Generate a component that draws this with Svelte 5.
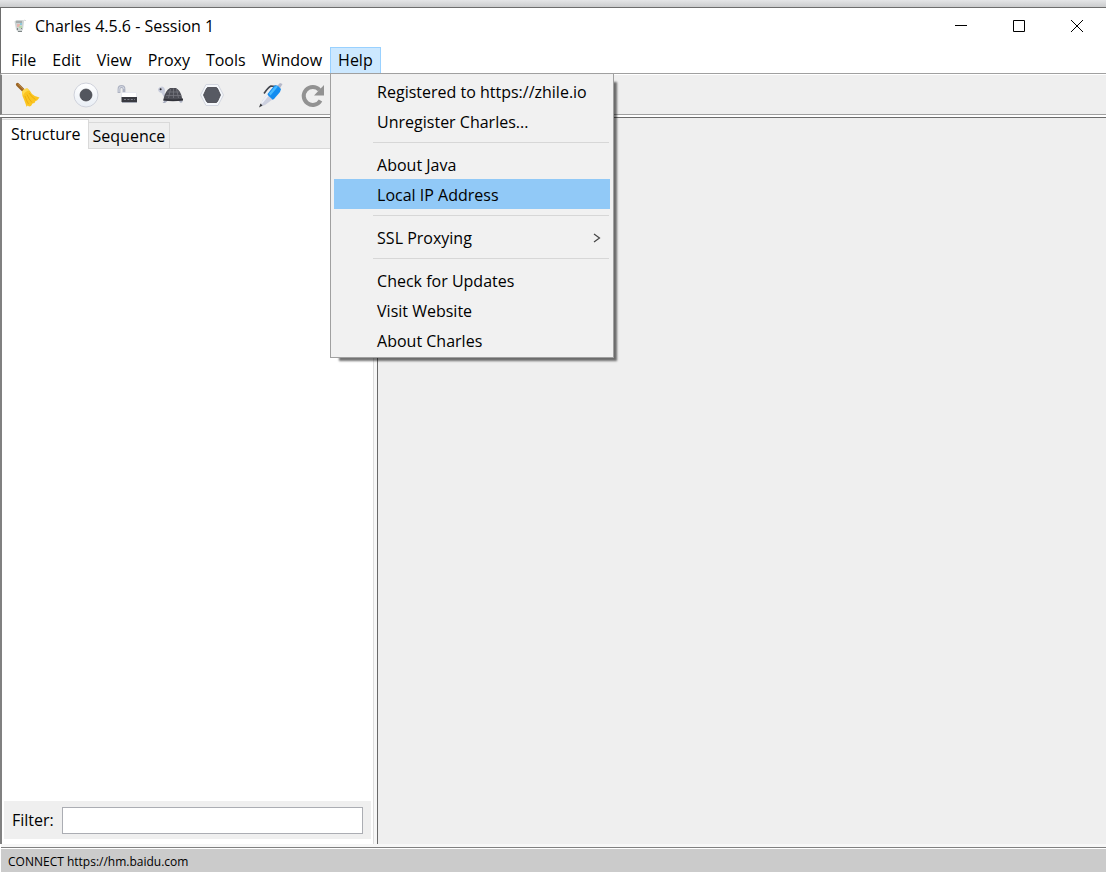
<script>
  const menus = ['File', 'Edit', 'View', 'Proxy', 'Tools', 'Window', 'Help'];
  const helpGroups = [
    ['Registered to https://zhile.io', 'Unregister Charles...'],
    ['About Java', 'Local IP Address'],
    ['SSL Proxying'],
    ['Check for Updates', 'Visit Website', 'About Charles']
  ];
  let open = $state('Help');
  let active = $state('Local IP Address');
  let tab = $state('Structure');
  let filter = $state('');
</script>

<div class="window">
  <div class="backdrop"></div>
  <header class="titlebar">
    <svg class="logo" width="14" height="14" viewBox="0 0 14 14" aria-hidden="true">
      <path d="M1.500 2.500l2-1.500h6l1.500 1.500-1 8-2 2.500H5L3 10.500z" fill="#cdd3d3" />
      <path d="M3 2h6v2H3z" fill="#a3abab" />
      <path d="M4 5h3v3H4z" fill="#e4b7ae" />
      <path d="M7 4h2v2H7z" fill="#8fc7d8" />
      <path d="M6 7h3v2H6z" fill="#b6d9a8" />
      <path d="M4 9h1v2H4zM8 9h1v1H8zM5 12h4v1H5z" fill="#7e8585" />
      <path d="M10 2l2-1 1 1" fill="none" stroke="#d5d8d8" />
    </svg>
    <h1>Charles 4.5.6 - Session 1</h1>
    <div class="controls">
      <button aria-label="Minimize"><svg width="12" height="12" viewBox="0 0 12 12"><path d="M0 5.500h12" /></svg></button>
      <button aria-label="Maximize"><svg width="12" height="12" viewBox="0 0 12 12"><path d="M.5 .5h11v11H.5z" /></svg></button>
      <button aria-label="Close"><svg width="12" height="12" viewBox="0 0 12 12"><path d="M0 0l12 12M12 0L0 12" /></svg></button>
    </div>
  </header>

  <nav class="menubar">
    {#each menus as name}
      <div class="menu">
        <button class="menu-button" class:open={open === name} onclick={() => (open = open === name ? '' : name)}>{name}</button>
        {#if name === 'Help' && open === 'Help'}
          <div class="popup" role="menu">
            {#each helpGroups as group, i}
              {#if i > 0}<div class="separator" role="separator"></div>{/if}
              {#each group as item}
                <button class="item" class:active={active === item} role="menuitem" onmouseenter={() => (active = item)}>
                  <span>{item}</span>
                  {#if item === 'SSL Proxying'}
                    <svg width="8" height="10" viewBox="0 0 8 10" aria-hidden="true"><path d="M1 1l5.500 4L1 9" fill="none" stroke="#444" stroke-width="1.200" /></svg>
                  {/if}
                </button>
              {/each}
            {/each}
          </div>
        {/if}
      </div>
    {/each}
  </nav>

  <div class="toolbar">
    <button aria-label="Clear session">
      <svg width="26" height="26" viewBox="0 0 26 26">
        <path d="M2.500 2.500l6 6" stroke="#9a6424" stroke-width="3.200" stroke-linecap="round" />
        <path d="M3 2.200l5.500 5.500" stroke="#c28a42" stroke-width="1" />
        <path d="M7 9.500Q9 6 12.500 6.500L15 9l2 3q3 3 7.500 3.500l-2.500 3-1.500 .5-1 2-2 .5-1.500 2.500-2 .5-1.200-1-1.300 1.300Q10.500 21 7.500 14z" fill="#fbc520" />
        <path d="M7 9.500Q9 6 12.500 6.500L14.500 8.500Q10 9 8 13.500z" fill="#ffd94d" />
        <path d="M10 14q1.500 5 3.500 8M12 12.500q2 5 5 8M14 11q3 4.500 6.500 6.500" fill="none" stroke="#e7a70c" stroke-width=".8" />
      </svg>
    </button>
    <button class="after-gap" aria-label="Record">
      <svg width="26" height="26" viewBox="0 0 26 26">
        <defs><linearGradient id="disc" x2="0" y2="1"><stop stop-color="#fff" /><stop offset="1" stop-color="#e9eef5" /></linearGradient></defs>
        <circle cx="13" cy="13" r="12" fill="url(#disc)" stroke="#cfd2db" />
        <circle cx="13" cy="13" r="6" fill="#53565e" stroke="#414148" stroke-width=".7" />
      </svg>
    </button>
    <button aria-label="SSL proxying">
      <svg width="26" height="26" viewBox="0 0 26 26">
        <path d="M4 11V7q0-2.500 2.500-2.500T9 7v4.500" fill="none" stroke="#aeb3c2" stroke-width="2.800" />
        <path d="M4 10V7q0-2.500 2.500-2.500T9 7" fill="none" stroke="#d7dbe5" stroke-width="1" />
        <rect x="6.500" y="10.500" width="15" height="6" rx="1" fill="#fff" stroke="#e0e3ec" stroke-width=".7" />
        <path d="M6.500 15h15.500v5H6.500z" fill="#393a41" />
        <path d="M7 20h15v1H7z" fill="#a4a8b3" />
        <path d="M9 17.500h11" stroke="#7c7e88" stroke-dasharray="2 1.400" />
      </svg>
    </button>
    <button aria-label="Throttling">
      <svg width="26" height="26" viewBox="0 0 26 26">
        <path d="M1 7q1-2.500 4-2.500 3 .5 3 4.500l-.5 2 2 3-2 2-3-5Q1 10.500 1 7z" fill="#c8ccdb" />
        <path d="M6 17.500h5l-1 2-2 1.500H5.500l1.500-1.500zM21 17.500h4l.5 2.500q-1 1-2.500 .5z" fill="#aaafc0" />
        <path d="M6.500 17Q8 9 13 6h6Q24 9 25 16l1 1v1.500q-10 1.500-20 0z" fill="#4c4d55" />
        <path d="M9 13.500h15M10.500 10h12M13.500 7l-2 9M16.500 6.500V16M19.500 7l2 9" fill="none" stroke="#75767e" stroke-width=".8" />
        <path d="M7 17.500q9 1.500 19 0" fill="none" stroke="#303138" stroke-width="1.400" />
        <circle cx="3.600" cy="7.200" r="1" fill="#25262b" />
      </svg>
    </button>
    <button aria-label="Breakpoints">
      <svg width="26" height="26" viewBox="0 0 26 26">
        <path d="M7 2.500h12L24.500 13 19 23.500H7L1.500 13z" fill="#f5f8fc" stroke="#d3d6df" stroke-linejoin="round" />
        <path d="M9 5.500h8q1 0 1.500 1L21.500 13l-3 6.500q-.5 1-1.500 1H9q-1 0-1.500-1L4.500 13l3-6.500q.5-1 1.500-1z" fill="#575a63" stroke="#42434a" stroke-width=".8" />
      </svg>
    </button>
    <button class="after-gap" aria-label="Compose">
      <svg width="26" height="26" viewBox="0 0 26 26">
        <path d="M7 11.500Q11 5.500 14 4l5 .5" fill="none" stroke="#42454d" stroke-width="1.600" />
        <path d="M20 4l3-3 2.500 1-2.500 4.500z" fill="#b5b8c9" />
        <path d="M10.500 12l6-7.500q2-2 4.500-.5l3 3-1 3-6 7q-2 1.500-4.500-.5t-2-4.500z" fill="#138df0" />
        <path d="M12 11.500l6-7q1.500-1 3 0l-7.500 9z" fill="#49bbff" />
        <path d="M10 12.500l5.500 5L8 23l-4 1.500 1-5.500z" fill="#ccd0df" />
        <path d="M10 12.500l1.500 1.500L5 22l-.5-2z" fill="#eef0f7" />
        <path d="M3.500 21.500l2 2L2 25.500z" fill="#34353b" />
      </svg>
    </button>
    <button aria-label="Repeat">
      <svg width="26" height="26" viewBox="0 0 26 26">
        <path d="M21.500 18.500A9 9 0 1 1 20.500 8" fill="none" stroke="#929292" stroke-width="4" />
        <path d="M25 3v10.500H15z" fill="#929292" />
      </svg>
    </button>
  </div>

  <main class="split">
    <section class="left">
      <div class="tabs" role="tablist">
        {#each ['Structure', 'Sequence'] as name}
          <button role="tab" aria-selected={tab === name} class:selected={tab === name} onclick={() => (tab = name)}>{name}</button>
        {/each}
      </div>
      <div class="tree"></div>
      <div class="filter">
        <label for="filter">Filter:</label>
        <input id="filter" type="text" bind:value={filter} />
      </div>
    </section>
    <section class="right"></section>
  </main>

  <footer class="status">CONNECT https://hm.baidu.com</footer>
</div>

<style>
  :global(body) {
    margin: 0;
    background: #efefef;
  }
  .window {
    display: flex;
    flex-direction: column;
    box-sizing: border-box;
    min-height: 100vh;
    background: #fff;
    color: #000;
    font: 16px/22px "Open Sans", "Noto Sans", sans-serif;
  }
  button {
    margin: 0;
    padding: 0;
    border: 0;
    background: none;
    color: inherit;
    font: inherit;
  }
  svg {
    display: block;
  }
  .backdrop {
    height: 7px;
    background: linear-gradient(#e4e5e7, #cbcccd);
  }
  .titlebar {
    display: flex;
    align-items: center;
    box-sizing: border-box;
    height: 39px;
    padding: 0 0 2px 12px;
    border-top: 1px solid #6d6d6d;
    border-left: 1px solid #6d6d6d;
  }
  h1 {
    flex: 1;
    margin: 0 0 0 8px;
    font-size: 16px;
    font-weight: 400;
  }
  .controls {
    display: flex;
  }
  .controls button {
    display: grid;
    place-items: center;
    width: 58px;
    height: 36px;
  }
  .controls path {
    fill: none;
    stroke: #000;
  }
  .menubar {
    display: flex;
    height: 27px;
    padding-left: 2px;
    border-left: 1px solid #6d6d6d;
    border-bottom: 1px solid #a0a0a0;
  }
  .menu {
    position: relative;
    display: flex;
    padding-top: 1px;
  }
  .menu-button {
    padding: 0 7px 1px;
    border: 1px solid transparent;
    border-bottom: 0;
  }
  .menu-button.open {
    border-color: #99d1ff;
    background: #cce8ff;
  }
  .popup {
    position: absolute;
    z-index: 1;
    top: 100%;
    left: 0;
    box-sizing: border-box;
    width: 284px;
    padding: 2px 3px;
    border: 1px solid #a0a0a0;
    background: #f1f1f1;
    box-shadow: 6px 6px 2px -3px #0000008c;
  }
  .item {
    display: flex;
    align-items: center;
    justify-content: space-between;
    width: 100%;
    height: 30px;
    padding: 1px 9px 0 43px;
    text-align: left;
    white-space: nowrap;
  }
  .item.active {
    background: #91c9f7;
  }
  .separator {
    height: 1px;
    margin: 6px 1px 6px 39px;
    background: #d7d7d7;
  }
  .toolbar {
    display: flex;
    align-items: center;
    gap: 16px;
    height: 39px;
    padding-left: 13px;
    border-top: 1px solid #fff;
    border-left: 2px solid #808080;
    border-bottom: 1px solid #a0a0a0;
    background: #efefef;
  }
  .after-gap {
    margin-left: 16px;
  }
  .split {
    display: flex;
    flex: 1;
    margin-top: 2px;
    border-top: 1px solid #6b6b6b;
    border-left: 2px solid #808080;
    background: #efefef;
  }
  .left {
    display: flex;
    flex-direction: column;
    width: 34%;
    border-right: 1px solid #696969;
    box-shadow: inset -3px 0 #f7f7f7, inset -4px 0 #dcdcdc;
    background: #fff;
  }
  .tabs {
    display: flex;
    align-items: flex-end;
    height: 30px;
    margin-right: 4px;
    padding-top: 1px;
    background: linear-gradient(#d9d9d9, #d9d9d9) bottom / 100% 1px no-repeat #efefef;
  }
  .tabs button {
    box-sizing: border-box;
    height: 27px;
    padding: 0 4px;
    border: 1px solid #d9d9d9;
    border-left: 0;
    background: #efefef;
  }
  .tabs .selected {
    height: 30px;
    padding: 0 7px 1px 9px;
    border-bottom: 0;
    background: #fff;
  }
  .tree {
    flex: 1;
  }
  .filter {
    display: flex;
    align-items: center;
    gap: 8px;
    height: 38px;
    margin: 0 6px 5px 2px;
    padding: 0 8px;
    background: #efefef;
  }
  .filter input {
    flex: 1;
    box-sizing: border-box;
    min-width: 0;
    height: 27px;
    padding: 0 4px;
    border: 1px solid #abadb3;
    background: #fff;
    font: inherit;
  }
  .right {
    flex: 1;
  }
  .status {
    margin: 3px 0 0 1px;
    padding: 4px 7px 0;
    border-top: 1px solid #808080;
    box-shadow: inset 0 1px #fff, 0 -3px #f7f7f7;
    background: #cbcbcb;
    font-size: 12px;
    line-height: 20px;
  }
</style>
